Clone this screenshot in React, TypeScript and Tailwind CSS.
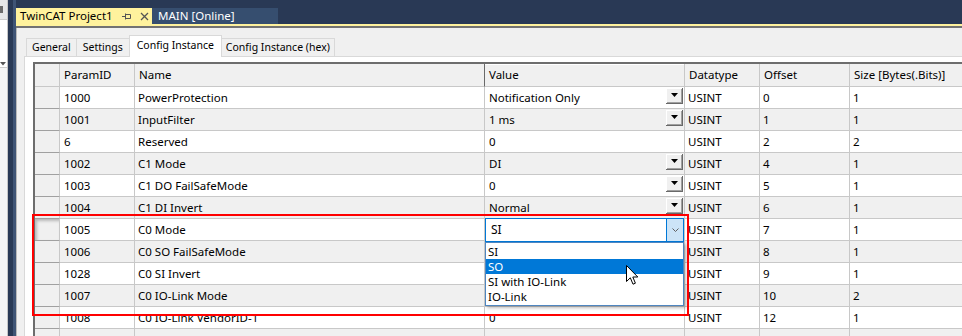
const ROWS = [
  { id: '1000', name: 'PowerProtection', value: 'Notification Only', combo: true, offset: '0', size: '1' },
  { id: '1001', name: 'InputFilter', value: '1 ms', combo: true, offset: '1', size: '1' },
  { id: '6', name: 'Reserved', value: '0', combo: false, offset: '2', size: '2' },
  { id: '1002', name: 'C1 Mode', value: 'DI', combo: true, offset: '4', size: '1' },
  { id: '1003', name: 'C1 DO FailSafeMode', value: '0', combo: true, offset: '5', size: '1' },
  { id: '1004', name: 'C1 DI Invert', value: 'Normal', combo: true, offset: '6', size: '1' },
  // 1005..1007 values sit under the open combo / list
  { id: '1005', name: 'C0 Mode', value: '', combo: false, offset: '7', size: '1' },
  { id: '1006', name: 'C0 SO FailSafeMode', value: '', combo: false, offset: '8', size: '1' },
  { id: '1028', name: 'C0 SI Invert', value: '', combo: false, offset: '9', size: '1' },
  { id: '1007', name: 'C0 IO-Link Mode', value: '', combo: false, offset: '10', size: '2' },
  { id: '1008', name: 'C0 IO-Link VendorID-1', value: '0', combo: false, offset: '12', size: '1' },
  { id: '1009', name: 'C0 IO-Link VendorID-2', value: '0', combo: false, offset: '13', size: '1' },
];

const OPTIONS = ['SI', 'SO', 'SI with IO-Link', 'IO-Link'];

const COLS = 'grid grid-cols-[25px_75px_350px_200px_75px_90px_200px]';

function DropButton() {
  return (
    <div className="flex h-[16px] w-[17px] shrink-0 items-center justify-center self-start mt-[1px] mr-[1px] bg-[#f0f0f0] shadow-[inset_-1px_-1px_#696969,inset_1px_1px_#ffffff,inset_-2px_-2px_#a0a0a0]">
      <svg width="7" height="4" viewBox="0 0 7 4" className="-mt-[2px] -ml-[1px]">
        <polygon points="0,0 7,0 3.5,4" fill="#000" />
      </svg>
    </div>
  );
}

function Cell({ children, className = '' }: { children?: React.ReactNode; className?: string }) {
  return (
    <div className={`flex items-center border-r border-b border-[#c8c8c8] pl-[3px] whitespace-nowrap overflow-hidden ${className}`}>
      {children}
    </div>
  );
}

export default function App() {
  return (
    <div className="relative flex h-[336px] w-[962px] overflow-hidden bg-[#293955] font-['Noto_Sans',sans-serif] text-black">
      {/* ── left dock strip ── */}
      <div className="flex w-[8px] shrink-0 flex-col border-r border-[#c6c6c6] bg-[#f5f5f5]">
        <div className="flex h-[20px] shrink-0 items-center bg-[#e6e7e8] border-b border-[#cccccc]">
          <div className="h-[7px] w-[3px] bg-[#6b6b6b]" />
        </div>
        <div className="flex h-[48px] shrink-0 items-end bg-white border-b border-[#cccccc] pb-[1px]">
          <svg width="6" height="4" viewBox="0 0 6 4">
            <polygon points="0,0 6,0 3,3.5" fill="#555" />
          </svg>
        </div>
      </div>
      <div className="w-[8px] shrink-0 border-r-[3px] border-[#3f5475]" />

      {/* ── document area ── */}
      <div className="flex min-w-0 flex-1 flex-col">
        <div className="flex h-[24px] shrink-0 items-end text-[11.5px]">
          <div className="flex h-[16px] w-[136px] items-center bg-[#fff29d] pl-[4px]">
            <span className="leading-none">TwinCAT Project1</span>
            <svg width="9" height="7" viewBox="0 0 9 7" className="ml-[9px]">
              <path d="M0 3.5H3M3.5 0.5V6.5M3.5 1.5H8.5V5.5H3.5" stroke="#555" strokeWidth="1" fill="none" />
            </svg>
            <svg width="9" height="9" viewBox="0 0 9 9" className="ml-[9px]">
              <path d="M1 1L8 8M8 1L1 8" stroke="#555" strokeWidth="1.3" />
            </svg>
          </div>
          <div className="flex h-[16px] w-[126px] items-center bg-[#364e6f] pl-[6px] text-white">
            <span className="leading-none">MAIN [Online]</span>
          </div>
        </div>
        <div className="h-[2px] shrink-0 bg-[#fff29d]" />
        <div className="h-[2px] shrink-0 bg-[#727272]" />

        <div className="flex min-h-0 flex-1 flex-col overflow-hidden border-l border-[#b9b9b9] bg-[#f0f0f0] pl-[7px]">
          {/* tab strip */}
          <div className="flex h-[28px] shrink-0 items-end pl-[2px] text-[10.5px]">
            <div className="flex h-[18px] items-center border border-b-0 border-[#d9d9d9] px-[5px]">General</div>
            <div className="-ml-px flex h-[18px] items-center border border-b-0 border-[#d9d9d9] px-[6px]">Settings</div>
            <div className="relative z-10 -mb-px -ml-px flex h-[22px] items-center border border-b-0 border-[#d9d9d9] bg-white px-[7px] pb-[2px]">Config Instance</div>
            <div className="-ml-px flex h-[18px] items-center border border-b-0 border-[#d9d9d9] px-[4px]">Config Instance (hex)</div>
          </div>

          {/* tab page */}
          <div className="min-h-0 flex-1 border-l border-t border-[#d9d9d9] bg-white pl-[8px] pt-[5px]">
            <div className="relative border-l-2 border-t-2 border-[#6d6d6d] text-[11.5px]">
              <div className={`${COLS} h-[23px] bg-[#f0f0f0]`}>
                <Cell className="border-[#a0a0a0]" />
                <Cell className="border-[#a0a0a0] pl-[4px]">ParamID</Cell>
                <Cell className="border-[#a0a0a0] border-r-[#696969] pl-[4px]">Name</Cell>
                <Cell className="border-[#a0a0a0] pl-[4px] shadow-[inset_0_1px_#ffffff]">Value</Cell>
                <Cell className="border-[#a0a0a0] pl-[4px]">Datatype</Cell>
                <Cell className="border-[#a0a0a0] pl-[4px]">Offset</Cell>
                <Cell className="border-[#a0a0a0] pl-[4px]">Size [Bytes(.Bits)]</Cell>
              </div>
              {ROWS.map((r, i) => (
                <div key={r.id} className={`${COLS} h-[22px] ${i % 2 ? 'bg-[#f0f0f0]' : 'bg-white'}`}>
                  <Cell
                    className={`bg-[#f0f0f0] border-b-[#a0a0a0] ${r.id === '1005' ? 'shadow-[inset_2px_2px_3px_#b8b8b8]' : ''}`}
                  />
                  <Cell className="pl-[4px]">{r.id}</Cell>
                  <Cell>{r.name}</Cell>
                  <Cell className="pl-[4px]">
                    <span className="flex-1">{r.value}</span>
                    {r.combo && <DropButton />}
                  </Cell>
                  <Cell>USINT</Cell>
                  <Cell>{r.offset}</Cell>
                  <Cell>{r.size}</Cell>
                </div>
              ))}

              {/* open combo box */}
              <div className="absolute left-[450px] top-[154px] flex h-[24px] w-[199px] border border-[#0078d7] bg-white">
                <span className="flex flex-1 items-center pl-[5px] text-[12px]">SI</span>
                <div className="flex w-[17px] items-center justify-center border-l border-[#0078d7] bg-[#cce4f7]">
                  <svg width="7" height="4" viewBox="0 0 7 4">
                    <path d="M0.5 0.5L3.5 3.5L6.5 0.5" stroke="#606060" strokeWidth="1" fill="none" />
                  </svg>
                </div>
              </div>
              <div className="absolute left-[450px] top-[178px] flex w-[199px] flex-col border border-[#4f86c0] bg-white py-px shadow-[2px_2px_3px_rgba(0,0,0,0.25)] text-[11.5px]">
                {OPTIONS.map((o) => (
                  <div
                    key={o}
                    className={`flex h-[15px] items-center pl-[2px] leading-none ${o === 'SO' ? 'bg-[#0078d7] text-white' : ''}`}
                  >
                    {o}
                  </div>
                ))}
              </div>
            </div>
          </div>
        </div>
      </div>

      {/* highlight + cursor */}
      <div className="pointer-events-none absolute left-[32px] top-[214px] h-[102px] w-[657px] border-2 border-[#ff0000]" />
      <svg width="13" height="21" viewBox="0 0 13 21" className="pointer-events-none absolute left-[626px] top-[265px]">
        <path d="M0.5 0.5V16.5L4.3 12.8L7 19.2L9.4 18.2L6.8 12H11.8Z" fill="#fff" stroke="#000" strokeWidth="1" strokeLinejoin="round" />
      </svg>
    </div>
  );
}
